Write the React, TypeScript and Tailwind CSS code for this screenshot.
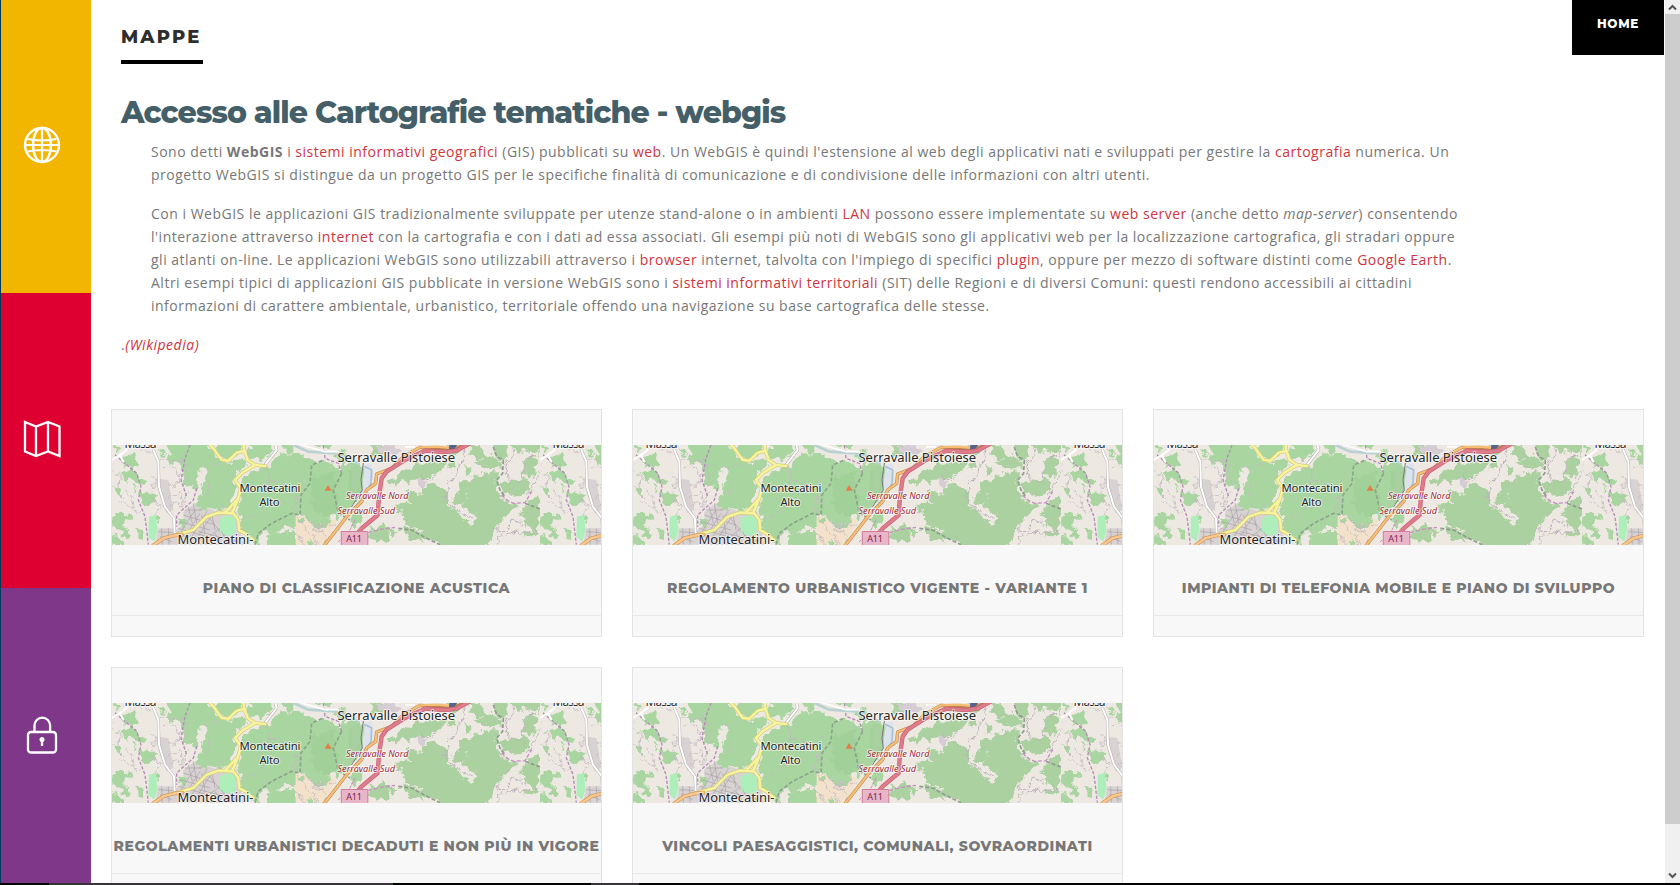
import React from "react";

const LINK = "text-[#d0343c]";
const HEAD = "font-['Montserrat','Inter',sans-serif]";

function A({ children }: { children: React.ReactNode }) {
  return <a className={LINK}>{children}</a>;
}

function Tile() {
  return (
    <g>
      <filter id="rough" x="-5%" y="-5%" width="110%" height="110%">
        <feTurbulence type="fractalNoise" baseFrequency=".045" numOctaves="3" seed="4" />
        <feDisplacementMap in="SourceGraphic" scale="34" xChannelSelector="R" yChannelSelector="G" />
      </filter>
      <rect width="428" height="100" fill="#eee8e2" />
      {/* western half */}
      <g transform="translate(-7 -45) scale(.33333)" strokeLinejoin="round">
        <path fill="#d9d2d2" d="M235 335 L270 310 L340 335 L395 335 L415 434 L215 434 L205 395 L235 375Z M160 385 L205 385 L215 434 L150 434Z M150 235 L190 240 L205 330 L185 340 L165 290Z" />
        <g fill="#a9d6a0" filter="url(#rough)">
          <path d="M185 125 L305 125 L330 170 L370 190 L412 175 L425 195 L390 225 L385 245 L392 275 L375 320 L345 335 L318 325 L300 338 L276 318 L285 285 L300 215 L285 205 L278 260 L262 270 L262 245 L238 262 L228 225 L236 195 L215 182 L203 195 L188 180 L198 160Z" />
          <path d="M345 125 L412 125 L400 160 L370 178 L348 172 L335 145Z M425 150 L445 125 L505 125 L500 160 L470 185 L445 175Z M525 125 L570 125 L560 160 L540 155Z M690 160 L720 150 L725 180 L700 190Z M610 130 L680 130 L660 145Z" />
          <path d="M430 210 L485 205 L500 180 L530 160 L560 160 L600 170 L655 190 L700 205 L720 185 L780 200 L780 270 L745 320 L700 355 L685 340 L655 360 L660 385 L625 380 L600 345 L572 340 L570 390 L540 380 L510 400 L480 395 L450 434 L425 405 L405 395 L402 345 L385 325 L405 300 L412 265Z" />
          <path d="M60 165 L88 158 L100 190 L85 195 L105 235 L125 240 L115 255 L80 240 L62 245 L45 220 L70 215 L75 200 L50 192Z M25 250 L45 262 L48 285 L30 290Z M100 265 L118 280 L155 285 L152 305 L125 325 L105 305Z M22 345 L45 338 L80 350 L85 365 L60 360 L55 380 L85 405 L70 420 L45 395 L22 385Z M140 350 L160 345 L158 365Z M155 140 L180 145 L185 170 L168 165Z M225 355 L238 360 L235 385 L220 375Z M90 385 L120 395 L118 420 L95 410Z M490 400 L570 395 L570 440 L480 440Z M735 360 L765 330 L775 345 L745 385Z M20 400 L45 410 L60 440 L20 440Z M20 145 L40 140 L35 165Z M85 255 L95 258 L90 275Z" />
        </g>
        <path fill="#9dcc93" opacity=".5" filter="url(#rough)" d="M620 230 L690 215 L690 260 L700 340 L650 350 L620 320Z M730 215 L770 210 L770 270 L730 310Z" />
        <path fill="#f3e1cb" d="M572 348 L600 350 L625 385 L660 388 L668 350 L695 362 L655 434 L572 434Z" />
        <path fill="#a9d6a0" filter="url(#rough)" d="M640 345 L672 350 L665 385 L642 380Z M575 352 L600 350 L592 372Z M610 415 L625 425 L615 440 L600 440Z" />
        <path fill="#aeeebb" d="M132 350 L152 345 L158 390 L148 425 L130 410Z M343 358 Q368 335 393 358 L392 402 Q368 412 345 398Z" />
        <path stroke="#a8a2a8" strokeWidth="2" fill="none" d="M225 400 L270 330 M240 410 L285 340 M255 420 L305 335 M235 345 L330 375 M225 365 L315 390 M220 385 L300 408 M270 425 L320 345 M290 345 L300 400 M310 350 L345 395 M300 420 L345 385 M315 434 L360 405 M280 395 L400 425 M330 400 L350 434 M350 395 L370 434 M380 410 L390 434 M160 395 L205 398 M165 410 L200 425 M170 385 L172 434 M190 385 L192 434 M240 330 L290 330 M250 320 L262 370 M265 310 L275 370 M320 340 L330 390" />
        <g stroke="#c2b9bf" strokeWidth="2.5" fill="none" filter="url(#rough)">
          <path d="M160 175 L200 185 L230 180 L235 240 L205 260 M170 205 L215 205 L225 245 L190 255 M180 290 L225 280 L228 310 L195 315 M245 185 L250 250 M20 200 L45 230 L40 280 L60 300 M105 140 L130 165 L150 150 M135 220 L150 240 L140 290 L165 320 L150 345 M40 300 L80 330 L110 335" />
          <path d="M320 230 L310 280 M480 205 L500 240 L560 260 L600 230 M410 370 L440 345 L500 310 L530 300 M500 210 L485 270 M580 280 L570 350 M595 350 L640 380 L690 375 M640 385 L625 434 M560 390 L600 434" />
          <path d="M120 150 L155 165 M60 275 L85 290 L80 330 M250 270 L230 320 M285 210 L345 190 M345 300 L350 330 M580 355 L640 430 M640 390 L660 420 M630 378h20v16h-20z" />
        </g>
        <g fill="none" stroke="#b48cb8" strokeWidth="4" strokeDasharray="10 5">
          <path d="M30 165 L60 190 L95 220 L108 260 L100 300 L120 350 L130 434" />
          <path d="M255 135 L240 175 L228 240 L245 290 M275 265 L265 300 L215 345 L215 380 M655 135 L660 175 L700 190 L710 220" />
        </g>
        <path fill="none" stroke="#8ba48b" strokeWidth="5" strokeDasharray="12 6" d="M450 434 L460 400 L500 370 L560 340 L585 345 L588 285 L615 250 L620 195 L655 180 M710 220 L685 270 L700 340 L735 360" />
        <g fill="none" strokeLinecap="round">
          <path stroke="#b6b0b0" strokeWidth="9" d="M145 150 L160 185 L162 260 L180 320 L207 355 L209 402 M480 195 L515 150 L510 130" />
          <path stroke="#fff" strokeWidth="6" d="M145 150 L160 185 L162 260 L180 320 L207 355 L209 402 M480 195 L515 150 L510 130 M20 180 L45 165 L65 150 M45 165 L55 185" />
          <path stroke="#b9d1d3" strokeWidth="8" d="M565 135 L610 155 L690 160 L760 190" />
          <path stroke="#fff" strokeWidth="5" d="M590 135 L660 155 L700 155" />
          <path stroke="#c9c573" strokeWidth="11" d="M310 130 L325 145 L350 180 L370 182 L395 158 L418 152 L428 180 L450 195 L480 198 M418 152 L415 130 M450 195 L412 218 L390 240 L408 265 L398 300 L383 335 M208 406 L265 390 L305 350 L340 338 L385 340 L400 360 L402 390 L420 400 L445 420 M360 338 L400 295" />
          <path stroke="#f6f39b" strokeWidth="8" d="M310 130 L325 145 L350 180 L370 182 L395 158 L418 152 L428 180 L450 195 L480 198 M418 152 L415 130 M450 195 L412 218 L390 240 L408 265 L398 300 L383 335 M208 406 L265 390 L305 350 L340 338 L385 340 L400 360 L402 390 L420 400 L445 420 M360 338 L400 295" />
          <path stroke="#c98a4c" strokeWidth="11" d="M145 436 L175 415 L210 406 L232 404" />
          <path stroke="#f9c78c" strokeWidth="8" d="M145 436 L175 415 L210 406 L232 404" />
        </g>
        <path fill="#e07f4a" d="M659 272 L669 255 L680 272Z" />
      </g>
      {/* eastern half */}
      <g transform="translate(243 -45) scale(.33333)" strokeLinejoin="round">
        <path fill="#a9d0a0" d="M-10 200 L15 195 L18 240 L10 270 L-10 290Z" />
        <g fill="#abd1a0" filter="url(#rough)">
          <path d="M200 258 L240 250 L262 262 L280 290 L285 325 L318 345 L345 372 L362 375 L368 352 L345 335 L322 320 L335 290 L318 270 L315 245 L345 238 L355 225 L375 232 L385 218 L402 222 L420 205 L428 240 L425 270 L445 300 L470 315 L495 320 L470 330 L452 350 L445 345 L440 372 L415 385 L405 440 L262 440 L225 415 L190 410 L200 392 L175 385 L145 370 L148 350 L120 325 L135 310 L165 308 L150 292 L160 272 L190 285 L205 280Z" />
          <path d="M300 280 L318 260 L330 285 L338 300 L315 315 L290 308Z M345 125 L385 145 L398 170 L375 180 L350 160Z M330 190 L350 215 L340 232 L325 210Z M365 190 L400 165 L430 175 L440 205 L415 200 L395 208Z M410 125 L450 125 L460 175 L445 185 L420 160Z M460 125 L555 125 L555 170 L548 150 L525 160 L500 150 L490 165Z M508 185 L525 165 L545 185 L540 220 L520 235 L505 220Z M430 250 L490 240 L510 232 L522 250 L515 280 L480 290 L445 280Z M520 300 L550 290 L555 330 L540 395 L515 375 L508 385 L512 350 L485 350 L505 330Z" />
          <path d="M110 245 L140 210 L165 205 L180 190 L215 195 L240 180 L270 190 L262 215 L230 225 L200 240 L175 235 L165 255 L140 240 L125 262Z M275 125 L320 150 L310 160 L285 165Z M275 190 L300 180 L305 200 L285 215Z M95 240 L115 235 L110 255Z M40 125 L90 140 L80 165 L55 160Z M40 375 L60 390 L90 370 L110 390 L130 385 L120 405 L95 400 L100 425 L70 430 L45 410Z M140 375 L195 395 L205 425 L160 415Z M505 395 L550 398 L550 407 L510 410Z" />
        </g>
        <path fill="#d5cdd3" filter="url(#rough)" d="M190 230 L215 245 L210 268 L190 258Z M60 140 L110 135 L150 150 L120 170 L70 155Z" />
        <path fill="#dde3ec" d="M30 195 L50 190 L55 235 L30 300 L20 280 L25 230Z" />
        <g fill="none" stroke="#bbb2bb" strokeWidth="3" filter="url(#rough)">
          <path d="M330 150 L318 190 L300 220 L275 260 L268 290 L280 315 L300 325 M200 220 L215 240 L245 225 M445 180 L460 240 L490 250 L505 225 L505 180 L540 165 M470 145 L475 170 L455 200 M550 210 L545 240 L530 260 L520 290 M430 434 L445 405 L500 395 L550 398 M290 325 L325 340 L355 355 M415 385 L450 390 L470 360 L500 370" />
        </g>
        <path stroke="#8f9b8f" strokeWidth="5" strokeDasharray="12 6" fill="none" d="M415 140 L425 170 L445 180 L443 220 L425 240 L435 270 L450 290 M510 310 L555 327 M130 385 L170 390 L215 415 L255 434" />
        <path stroke="#c78dc4" strokeWidth="4" strokeDasharray="12 6" fill="none" d="M440 285 L455 300 L475 310 L510 308 L530 275 M40 398 L75 388 L120 382" />
        <g fill="none" strokeLinecap="round">
          <path stroke="#777" strokeWidth="3" d="M25 190 L18 240 L22 270 L-10 320" />
          <path stroke="#aac1d4" strokeWidth="5" d="M30 200 L50 210 L48 250 L25 290 L-40 370" />
          <path stroke="#b9844e" strokeWidth="10" d="M340 130 L290 150 L195 142 L145 170 L110 205 L65 222 L62 250 L35 270 L20 305 L-25 350 L-60 395 L-92 436" />
          <path stroke="#f6bd74" strokeWidth="7" d="M290 144 L245 140 L195 142 L145 170 L110 205 L65 222 L62 250 L35 270 L20 305 L-25 350 L-60 395 L-92 436" />
          <path stroke="#cc5f75" strokeWidth="13" d="M345 130 L305 152 L270 156 L210 152 L150 180 L95 215 L80 235 L72 290 L68 345 L20 385 L-5 415" />
          <path stroke="#dd7d8b" strokeWidth="9" d="M345 130 L305 152 L270 156 L210 152 L150 180 L95 215 L80 235 L72 290 L68 345 L20 385 L-5 415" />
          <path stroke="#c98dc0" strokeWidth="3" strokeDasharray="8 5" d="M0 360 L-20 400 L-50 425" />
        </g>
        <path fill="#58618c" d="M283 134 L308 134 L298 146 L282 148Z" />
        <path fill="#fff" d="M150 138h30v5h-30z" />
      </g>
      <path d="M229.300 86.500h26.500v14h-26.500z" fill="#e9b5c8" stroke="#cf7f9c" />
      <g fontFamily="Noto Sans, sans-serif" fill="#262626" stroke="#fff" strokeOpacity=".65" strokeWidth="2" paintOrder="stroke" strokeLinejoin="round">
        <text x="12.500" y="3" fontSize="12" textLength="32">Massa</text>
        <text x="225.500" y="16.600" fontSize="13" textLength="117.500">Serravalle Pistoiese</text>
        <text x="127.500" y="46.800" fontSize="11.300" textLength="61">Montecatini</text>
        <text x="147.500" y="61" fontSize="11.300" textLength="20">Alto</text>
        <text x="65.500" y="99.200" fontSize="13" textLength="76">Montecatini-</text>
        <g fill="#9e2838" fontStyle="italic" fontSize="9.200">
          <text x="234" y="54.300" textLength="62.500">Serravalle Nord</text>
          <text x="225.500" y="68.800" textLength="57.500">Serravalle Sud</text>
        </g>
        <text x="234.300" y="96.800" fontSize="9" textLength="15.500" stroke="none" fill="#7d2349">A11</text>
      </g>
    </g>
  );
}

function MapStrip() {
  return (
    <svg className="block h-[100px] w-full overflow-hidden" viewBox="0 0 489 100" preserveAspectRatio="xMinYMin slice">
      <svg width="428" height="100">
        <Tile />
      </svg>
      <svg x="428" width="61" height="100">
        <Tile />
      </svg>
    </svg>
  );
}

function Card({ title, spacing }: { title: string; spacing: string }) {
  return (
    <article className="h-[228px] w-[491px] border border-[#e3e3e3] bg-[#f8f8f8] pt-[35px]">
      <MapStrip />
      <h3 className={`${HEAD} flex h-[71px] items-start justify-center border-b border-[#e9e9e9] pt-[33px] text-sm leading-5 font-extrabold whitespace-nowrap text-[#777] ${spacing}`}>
        {title}
      </h3>
    </article>
  );
}

const CARDS = [
  { title: "PIANO DI CLASSIFICAZIONE ACUSTICA", spacing: "tracking-[0.6px]" },
  { title: "REGOLAMENTO URBANISTICO VIGENTE - VARIANTE 1", spacing: "tracking-[0.63px]" },
  { title: "IMPIANTI DI TELEFONIA MOBILE E PIANO DI SVILUPPO", spacing: "tracking-[0.54px]" },
  { title: "REGOLAMENTI URBANISTICI DECADUTI E NON PIÙ IN VIGORE", spacing: "tracking-[0.57px]" },
  { title: "VINCOLI PAESAGGISTICI, COMUNALI, SOVRAORDINATI", spacing: "tracking-[0.59px]" },
];

function Sidebar() {
  return (
    <nav className="flex w-[91px] shrink-0 flex-col border-l border-[#003a5c] text-white">
      <a className="flex h-[293px] items-center bg-[#f2b600] pl-[22px]">
        <svg width="38" height="38" viewBox="0 0 38 38" fill="none" stroke="currentColor" strokeWidth="2.400" className="-mt-[4px]">
          <circle cx="19" cy="19" r="17" />
          <ellipse cx="19" cy="19" rx="9" ry="17" />
          <path d="M19 2v34M4.500 13q14.500 3 29 0M4.500 25.500q14.500-3 29 0M2 19h34" strokeWidth="2.200" />
        </svg>
      </a>
      <a className="flex h-[295px] items-center bg-[#dd0031] pb-[3px] pl-[22px]">
        <svg width="38" height="38" viewBox="0 0 38 38" fill="none" stroke="currentColor" strokeWidth="2.300">
          <path d="M2 2L13 6.500L25 2L36.500 6.500V36L25 31.500L13 36L2 31.500ZM13 6.500V36M25 2V31.500" />
        </svg>
      </a>
      <a className="flex h-[295px] items-center bg-[#7e3789] pb-[2px] pl-[22px]">
        <svg width="38" height="38" viewBox="0 0 38 38" fill="none" stroke="currentColor" strokeWidth="2.300">
          <rect x="5" y="16" width="28" height="20.500" rx="3" />
          <path d="M11.500 16V9.500a7.800 7.800 0 0 1 15.600 0V16" />
          <circle cx="19" cy="23.500" r="2.500" fill="currentColor" stroke="none" />
          <path d="M19 24v6" />
        </svg>
      </a>
    </nav>
  );
}

function Scrollbar() {
  return (
    <div className="flex w-[15px] shrink-0 flex-col bg-[#f0f0f0] text-[#555]">
      <div className="flex h-[14px] items-center justify-center">
        <svg width="9" height="7" viewBox="0 0 9 7" fill="none" stroke="currentColor" strokeWidth="2"><path d="M1 5.500L4.500 2L8 5.500" /></svg>
      </div>
      <div className="h-[810px] bg-[#cdcdcd]" />
      <div className="flex flex-1 items-end justify-center pb-[4px]">
        <svg width="9" height="7" viewBox="0 0 9 7" fill="none" stroke="currentColor" strokeWidth="2"><path d="M1 1.500L4.500 5L8 1.500" /></svg>
      </div>
    </div>
  );
}

export default function App() {
  return (
    <div className="flex h-[885px] w-[1680px] flex-col overflow-hidden bg-white">
      <div className="flex h-[883px] overflow-hidden">
        <Sidebar />
        <main className="flex-1 overflow-hidden pl-5">
          <header className="flex h-[94px] justify-between pl-[10px]">
            <h1 className={`${HEAD} mt-6 h-10 w-[82px] border-b-4 border-black pt-px text-lg leading-[25px] font-extrabold tracking-[2.2px] text-[#2e2e2e]`}>MAPPE</h1>
            <a className={`${HEAD} mr-px flex h-[55px] w-[92px] justify-center bg-black pt-[14px] text-xs leading-5 font-extrabold tracking-[0.7px] text-white`}>HOME</a>
          </header>
          <section className="h-[315px] pl-[10px] font-['Open_Sans',sans-serif] text-sm leading-[23px] tracking-[0.502px] whitespace-nowrap text-[#777]">
            <h2 className={`${HEAD} h-[46px] pt-px text-[30px] leading-9 font-extrabold tracking-[-0.9px] text-[#445f68]`}>Accesso alle Cartografie tematiche - webgis</h2>
            <p className="mb-4 pl-[30px]">
              Sono detti <b>WebGIS</b> i <A>sistemi informativi geografici</A> (GIS) pubblicati su <A>web</A>. Un WebGIS è quindi l'estensione al web degli applicativi nati e sviluppati per gestire la <A>cartografia</A> numerica. Un<br />
              progetto WebGIS si distingue da un progetto GIS per le specifiche finalità di comunicazione e di condivisione delle informazioni con altri utenti.
            </p>
            <p className="mb-4 pl-[30px]">
              Con i WebGIS le applicazioni GIS tradizionalmente sviluppate per utenze stand-alone o in ambienti <A>LAN</A> possono essere implementate su <A>web server</A> (anche detto <i>map-server</i>) consentendo<br />
              l'interazione attraverso <A>internet</A> con la cartografia e con i dati ad essa associati. Gli esempi più noti di WebGIS sono gli applicativi web per la localizzazione cartografica, gli stradari oppure<br />
              gli atlanti on-line. Le applicazioni WebGIS sono utilizzabili attraverso i <A>browser</A> internet, talvolta con l'impiego di specifici <A>plugin</A>, oppure per mezzo di software distinti come <A>Google Earth</A>.<br />
              Altri esempi tipici di applicazioni GIS pubblicate in versione WebGIS sono i <A>sistemi informativi territoriali</A> (SIT) delle Regioni e di diversi Comuni: questi rendono accessibili ai cittadini<br />
              informazioni di carattere ambientale, urbanistico, territoriale offendo una navigazione su base cartografica delle stesse.
            </p>
            <p>.<i className={LINK}>(Wikipedia)</i></p>
          </section>
          <section className="grid grid-cols-[repeat(3,491px)] gap-[30px]">
            {CARDS.map((c) => <Card key={c.title} {...c} />)}
          </section>
        </main>
        <Scrollbar />
      </div>
      <div className="flex h-[2px] gap-[198px] bg-black pl-[49px]">
        <div className="w-[344px] bg-[#383339]" />
        <div className="w-[48px] bg-[#383339]" />
      </div>
    </div>
  );
}
